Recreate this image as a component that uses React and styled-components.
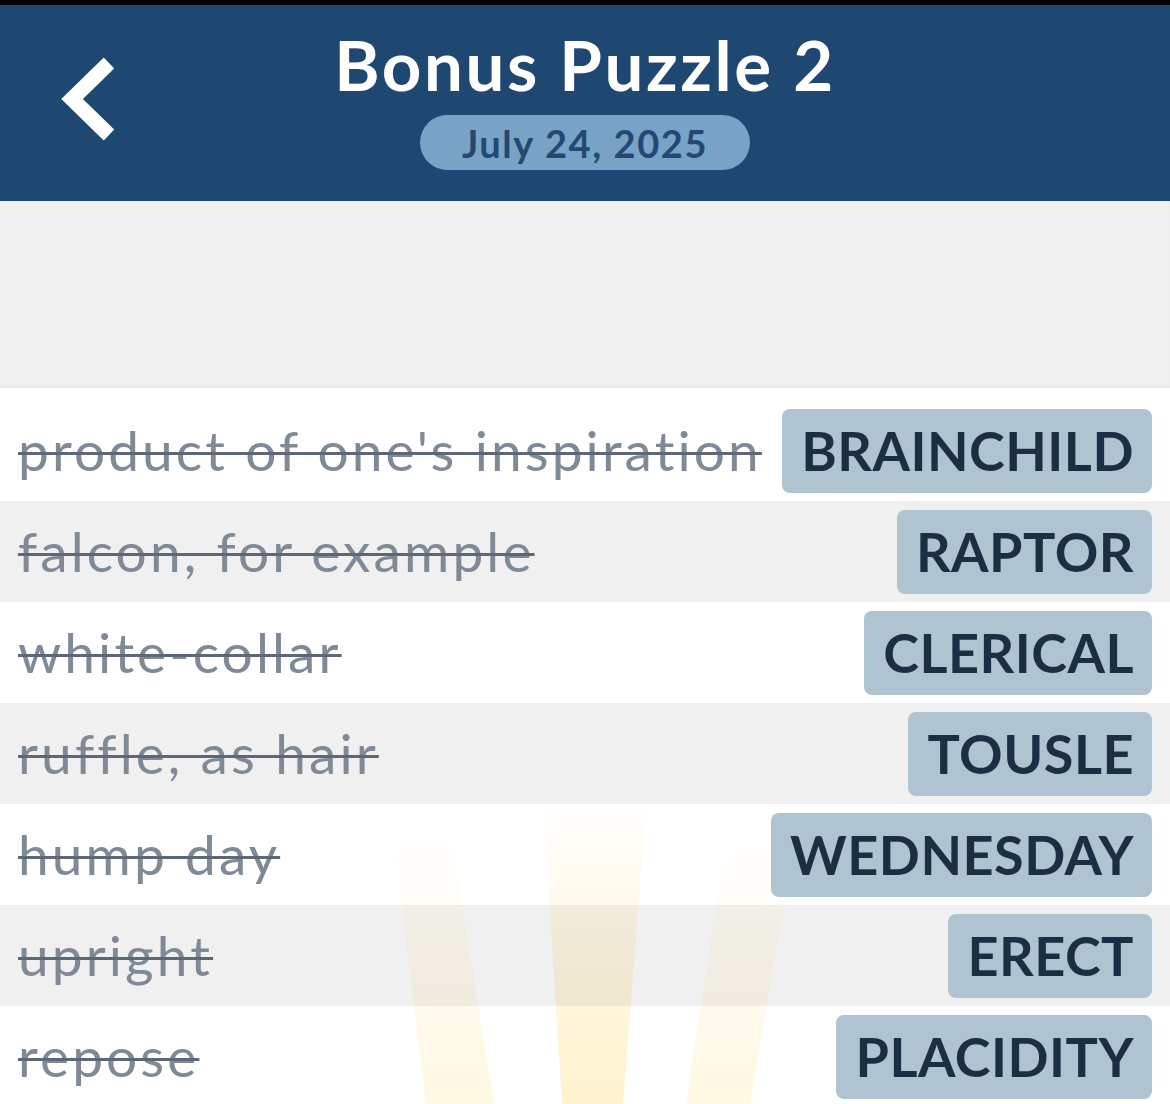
import styled, { createGlobalStyle } from 'styled-components'

const GlobalStyle = createGlobalStyle`
  html, body {
    margin: 0;
    padding: 0;
    background: #ffffff;
  }
  body {
    font-family: Lato, "Noto Sans", sans-serif;
  }
`

const Page = styled.div`
  width: 1170px;
  height: 1104px;
  overflow: hidden;
  display: flex;
  flex-direction: column;
  background: #ffffff;
`

const Header = styled.header`
  height: 196px;
  border-top: 5px solid #000000;
  background: #1e4771;
  display: grid;
  grid-template-columns: 1fr auto 1fr;
  align-items: center;
  flex-shrink: 0;
`

const BackButton = styled.button`
  justify-self: start;
  margin-left: 50px;
  margin-top: -4px;
  width: 72px;
  height: 96px;
  padding: 0;
  border: none;
  background: transparent;
  display: flex;
  align-items: center;
  justify-content: center;
  cursor: pointer;
`

const TitleBlock = styled.div`
  display: flex;
  flex-direction: column;
  align-items: center;
  gap: 12px;
  margin-top: -9px;
`

const Title = styled.h1`
  margin: 0;
  font-family: Lato, "Noto Sans", sans-serif;
  font-weight: 700;
  font-size: 69px;
  line-height: 76px;
  color: #ffffff;
  letter-spacing: 2.6px;
`

const DatePill = styled.div`
  height: 55px;
  width: 330px;
  box-sizing: border-box;
  border-radius: 28px;
  background: #78a3c6;
  color: #24486f;
  font-weight: 700;
  font-size: 38px;
  display: flex;
  align-items: center;
  justify-content: center;
  letter-spacing: 1.6px;
`

const Blank = styled.div`
  height: 187px;
  flex-shrink: 0;
  background: #f0f0f0;
  box-shadow: inset 0 -2px 2px rgba(0, 0, 0, 0.03);
`

const List = styled.ul`
  position: relative;
  margin: 0;
  padding: 12px 0 0;
  list-style: none;
  background: #ffffff;
`

const Rays = styled.svg`
  position: absolute;
  left: 0;
  top: 0;
  width: 1170px;
  height: 716px;
  z-index: 0;
  pointer-events: none;
`

const Row = styled.li`
  position: relative;
  z-index: 1;
  height: 101px;
  display: flex;
  align-items: center;
  justify-content: space-between;
  padding: 0 18px;
  box-sizing: border-box;
  background: ${p => (p.$shaded ? 'rgba(0, 0, 0, 0.059)' : 'transparent')};
`

const Clue = styled.span`
  font-family: Lato, "Noto Sans", sans-serif;
  font-size: 55px;
  font-weight: 400;
  color: #808a96;
  letter-spacing: 3.1px;
  text-decoration: line-through;
  text-decoration-color: #5c6877;
  text-decoration-thickness: 3px;
  white-space: nowrap;
  margin-top: -2px;
`

const Answer = styled.span`
  height: 84px;
  padding: 0 18px 0 19px;
  border-radius: 8px;
  background: #b0c3d0;
  color: #1c2f42;
  font-weight: 700;
  font-size: 54px;
  letter-spacing: 0.5px;
  display: flex;
  align-items: center;
  white-space: nowrap;
`

const entries = [
  ['product of one\'s inspiration', 'BRAINCHILD'],
  ['falcon, for example', 'RAPTOR'],
  ['white-collar', 'CLERICAL'],
  ['ruffle, as hair', 'TOUSLE'],
  ['hump day', 'WEDNESDAY'],
  ['upright', 'ERECT'],
  ['repose', 'PLACIDITY'],
]

function ChevronLeft() {
  return (
    <svg width="72" height="96" viewBox="0 0 72 96">
      <polyline
        points="59,10 22,46 59,82"
        fill="none"
        stroke="#ffffff"
        strokeWidth="15"
        strokeLinecap="butt"
        strokeLinejoin="miter"
      />
    </svg>
  )
}

function SunRays() {
  // faint sunburst coming up from below the list
  return (
    <Rays viewBox="0 0 1170 716">
      <defs>
        <linearGradient id="ray" x1="0" y1="0" x2="0" y2="1">
          <stop offset="0" stopColor="#ffe9a8" stopOpacity="0" />
          <stop offset="0.3" stopColor="#ffe9a8" stopOpacity="0.2" />
          <stop offset="0.6" stopColor="#ffe9a8" stopOpacity="0.38" />
          <stop offset="1" stopColor="#ffe9a8" stopOpacity="0.55" />
        </linearGradient>
        <linearGradient id="raySoft" x1="0" y1="0" x2="0" y2="1">
          <stop offset="0" stopColor="#ffe9a8" stopOpacity="0" />
          <stop offset="0.4" stopColor="#ffe9a8" stopOpacity="0.14" />
          <stop offset="1" stopColor="#ffe9a8" stopOpacity="0.32" />
        </linearGradient>
      </defs>
      <polygon points="543,410 647,410 623,716 562,716" fill="url(#ray)" />
      <polygon points="392,440 450,440 494,716 426,716" fill="url(#raySoft)" />
      <polygon points="726,450 796,450 750,716 686,716" fill="url(#raySoft)" />
    </Rays>
  )
}

export default function App() {
  return (
    <Page>
      <GlobalStyle />
      <Header>
        <BackButton aria-label="Back">
          <ChevronLeft />
        </BackButton>
        <TitleBlock>
          <Title>Bonus Puzzle 2</Title>
          <DatePill>July 24, 2025</DatePill>
        </TitleBlock>
        <div />
      </Header>
      <Blank />
      <List>
        <SunRays />
        {entries.map(([clue, answer], i) => (
          <Row key={answer} $shaded={i % 2 === 1}>
            <Clue>{clue}</Clue>
            <Answer>{answer}</Answer>
          </Row>
        ))}
      </List>
    </Page>
  )
}
